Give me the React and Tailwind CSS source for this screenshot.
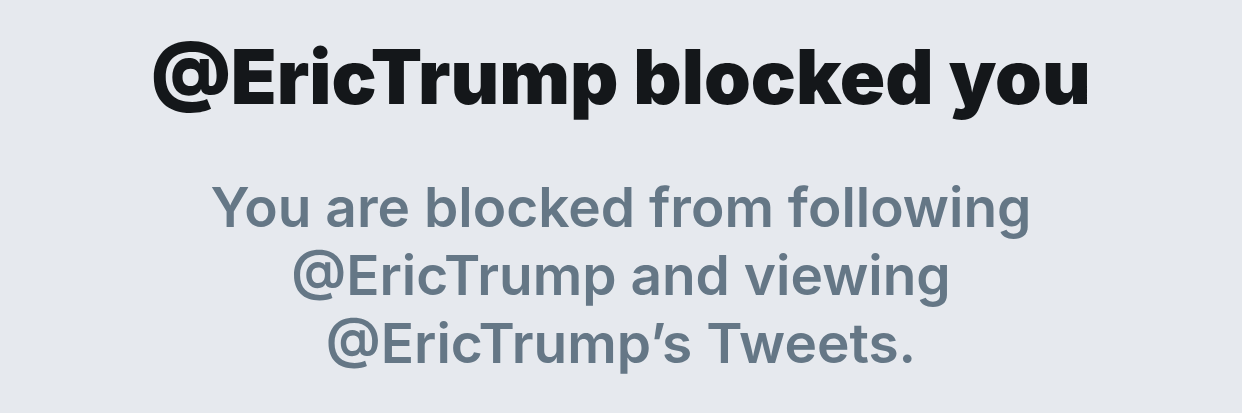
export default function App() {
  return (
    <main
      className="w-[1242px] h-[413px] bg-[#e6e9ee] flex flex-col items-center overflow-hidden"
      style={{ fontFamily: "Inter, 'Noto Sans', sans-serif" }}
    >
      <h1 className="mt-[33px] text-[75px] leading-[88px] font-black text-[#14171a]">
        @EricTrump blocked you
      </h1>
      <p className="mt-[52px] text-center text-[55px] leading-[68px] font-semibold text-[#657786]">
        You are blocked from following
        <br />
        @EricTrump and viewing
        <br />
        @EricTrump’s Tweets.
      </p>
    </main>
  );
}
